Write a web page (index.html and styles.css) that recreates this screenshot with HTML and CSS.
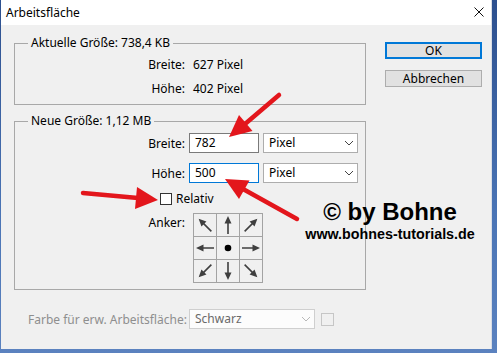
FILE: index.html
```html
<!DOCTYPE html>
<html lang="de">
<head>
<meta charset="utf-8">
<title>Arbeitsfläche</title>
<link rel="stylesheet" href="styles.css">
</head>
<body>
<svg class="defs" width="0" height="0" aria-hidden="true">
  <symbol id="ar" viewBox="0 0 22 22">
    <line x1="11" y1="20" x2="11" y2="8" stroke="#3f3f3f" stroke-width="1.6"/>
    <polygon points="11,2 7.5,9.5 14.5,9.5" fill="#3f3f3f"/>
  </symbol>
  <symbol id="chev" viewBox="0 0 10 6">
    <polyline points="1,1 5,5 9,1" fill="none" stroke="currentColor" stroke-width="1"/>
  </symbol>
</svg>
<div class="screen">
  <div class="dialog">
    <div class="titlebar">
      <span class="title">Arbeitsfläche</span>
      <svg class="close" width="10" height="10" viewBox="0 0 10 10"><path d="M0.5 0.5L9.5 9.5M9.5 0.5L0.5 9.5" stroke="#111" stroke-width="1"/></svg>
    </div>
    <div class="content">
      <div class="main">
        <fieldset class="group g1">
          <legend>Aktuelle Größe: 738,4 KB</legend>
          <div class="info-grid">
            <span class="lbl">Breite:</span><span>627 Pixel</span>
            <span class="lbl">Höhe:</span><span>402 Pixel</span>
          </div>
        </fieldset>
        <fieldset class="group g2">
          <legend>Neue Größe: 1,12 MB</legend>
          <div class="row">
            <span class="lbl">Breite:</span>
            <div class="input">782</div>
            <div class="select"><span>Pixel</span><svg class="chev" width="10" height="6"><use href="#chev"/></svg></div>
          </div>
          <div class="row">
            <span class="lbl">Höhe:</span>
            <div class="input focus">500</div>
            <div class="select"><span>Pixel</span><svg class="chev" width="10" height="6"><use href="#chev"/></svg></div>
          </div>
          <div class="row check-row">
            <span class="box"></span><span class="check-lbl">Relativ</span>
          </div>
          <div class="row anchor-row">
            <span class="lbl anchor-lbl">Anker:</span>
            <div class="anchor">
              <div class="cell"><svg width="22" height="22"><use href="#ar" transform="rotate(-45 11 11)"/></svg></div>
              <div class="cell"><svg width="22" height="22"><use href="#ar"/></svg></div>
              <div class="cell"><svg width="22" height="22"><use href="#ar" transform="rotate(45 11 11)"/></svg></div>
              <div class="cell"><svg width="22" height="22"><use href="#ar" transform="rotate(-90 11 11)"/></svg></div>
              <div class="cell"><svg width="22" height="22"><circle cx="11" cy="11" r="3.3" fill="#000"/></svg></div>
              <div class="cell"><svg width="22" height="22"><use href="#ar" transform="rotate(90 11 11)"/></svg></div>
              <div class="cell"><svg width="22" height="22"><use href="#ar" transform="rotate(-135 11 11)"/></svg></div>
              <div class="cell"><svg width="22" height="22"><use href="#ar" transform="rotate(180 11 11)"/></svg></div>
              <div class="cell"><svg width="22" height="22"><use href="#ar" transform="rotate(135 11 11)"/></svg></div>
            </div>
          </div>
        </fieldset>
        <div class="footer">
          <span class="footer-lbl">Farbe für erw. Arbeitsfläche:</span>
          <div class="select disabled"><span>Schwarz</span><svg class="chev" width="10" height="6"><use href="#chev"/></svg></div>
          <span class="swatch"></span>
        </div>
      </div>
      <div class="buttons">
        <div class="btn default">OK</div>
        <div class="btn">Abbrechen</div>
      </div>
    </div>
  </div>

  <svg class="annot" width="497" height="353" viewBox="0 0 497 353" aria-hidden="true">
    <g stroke="#e3161c" stroke-width="4.5" stroke-linecap="round" fill="#e3161c">
      <line x1="279" y1="95" x2="245" y2="124"/>
      <polygon stroke="none" points="229,137 252.5,131 239,115"/>
      <line x1="297" y1="219" x2="243" y2="189"/>
      <polygon stroke="none" points="225,179 249.5,180.5 239,199"/>
      <line x1="83" y1="193" x2="138" y2="198"/>
      <polygon stroke="none" points="158,200 135,209 137,187"/>
    </g>
  </svg>

  <div class="watermark">
    <div class="wm-big">© by Bohne</div>
    <div class="wm-small">www.bohnes-tutorials.de</div>
  </div>
</div>
</body>
</html>
```
FILE: styles.css
```css
* { box-sizing: border-box; }
html, body { margin: 0; padding: 0; }
body {
  width: 497px;
  height: 353px;
  overflow: hidden;
  background: #3f68ab;
  font-family: "Noto Sans", "DejaVu Sans", sans-serif;
  font-size: 12px;
  color: #000;
}
.defs { position: absolute; }
.screen {
  position: relative;
  width: 497px;
  height: 353px;
  background: linear-gradient(180deg, #2c4f8e 0%, #4a74b5 60%, #5b82bf 100%);
}
.dialog {
  margin-left: 1px;
  width: 491px;
  height: 349px;
  background: #f0f0f0;
  border-right: 1px solid #d9dde4;
}
.titlebar {
  height: 25px;
  background: #fff;
  display: flex;
  align-items: center;
  justify-content: space-between;
  padding: 0 7px 0 5px;
}
.title { line-height: 16px; }
.close { display: block; margin-top: -1px; }

.content {
  display: flex;
  padding: 10px 0 0 13px;
}
.main { width: 352px; }

.group {
  margin: 0;
  padding: 0;
  min-width: 0;
  border: 1px solid #a8a8a8;
}
.group legend {
  margin-left: 13px;
  padding: 0 3px;
  line-height: 16px;
}
.info-grid {
  display: grid;
  grid-template-columns: 170px auto;
  column-gap: 8px;
  grid-auto-rows: 24px;
  align-items: center;
  padding: 1px 0 4px;
}
.lbl { text-align: right; }

.g2 {
  margin-top: 8px;
  padding: 4px 0 6px;
}
.row {
  display: flex;
  align-items: center;
  gap: 4px;
  height: 20px;
  margin-bottom: 10px;
}
.row .lbl { width: 170px; }
.input {
  width: 70px;
  height: 20px;
  border: 1px solid #7a7a7a;
  background: #fff;
  padding-left: 5px;
  line-height: 18px;
}
.input.focus { border-color: #0078d7; }
.select {
  width: 95px;
  height: 20px;
  border: 1px solid #adadad;
  background: #fff;
  padding: 0 3px 0 5px;
  display: flex;
  align-items: center;
  justify-content: space-between;
  line-height: 18px;
  color: #000;
}
.chev { display: block; color: #444; }

.check-row {
  height: 12px;
  padding-left: 145px;
  gap: 4px;
  margin-bottom: 8px;
}
.box {
  width: 12px;
  height: 12px;
  border: 1px solid #333;
  background: #fff;
}
.check-lbl { line-height: 12px; }

.anchor-row {
  height: auto;
  align-items: flex-start;
  gap: 8px;
  margin-bottom: 0;
}
.anchor-lbl { margin-top: 2px; line-height: 16px; }
.anchor {
  display: grid;
  grid-template-columns: repeat(3, 22px);
  grid-template-rows: repeat(3, 22px);
  gap: 1px;
  padding: 1px;
  background: #a3a3a3;
}
.cell { background: #f0f0f0; }
.cell svg { display: block; }

.footer {
  display: flex;
  align-items: center;
  margin-top: 19px;
  padding-left: 14px;
}
.footer-lbl {
  width: 161px;
  white-space: nowrap;
  color: #8e8e8e;
}
.select.disabled {
  width: 126px;
  border-color: #cfcfcf;
  background: #fcfcfc;
  color: #6a6a6a;
}
.select.disabled .chev { color: #b8b8b8; }
.swatch {
  width: 13px;
  height: 13px;
  margin-left: 6px;
  border: 1px solid #c6c6c6;
  background: #f0f0f0;
}

.buttons {
  margin-left: 19px;
  padding-top: 7px;
  display: flex;
  flex-direction: column;
  gap: 11px;
}
.btn {
  width: 97px;
  height: 17px;
  border: 1px solid #adadad;
  background: #e1e1e1;
  text-align: center;
  line-height: 15px;
}
.btn.default {
  border: 2px solid #0078d7;
  line-height: 13px;
}

.annot {
  position: absolute;
  left: 0;
  top: 0;
  pointer-events: none;
}
.watermark {
  position: absolute;
  left: 290px;
  top: 198px;
  width: 200px;
  text-align: center;
  font-family: "Liberation Sans", Arial, sans-serif;
  font-weight: bold;
  color: #000;
}
.wm-big { font-size: 24px; line-height: 28px; }
.wm-small { font-size: 14.3px; line-height: 17px; }
```
